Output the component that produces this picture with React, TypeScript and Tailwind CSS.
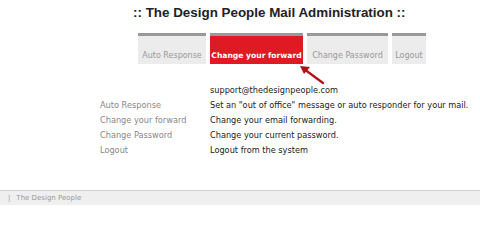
import React from 'react';

const tabs = [
  { label: 'Auto Response', w: 'w-[68px]', active: false },
  { label: 'Change your forward', w: 'w-[93px]', active: true },
  { label: 'Change Password', w: 'w-[81px]', active: false },
  { label: 'Logout', w: 'w-[34px]', active: false },
];

const rows = [
  ['Auto Response', 'Set an "out of office" message or auto responder for your mail.'],
  ['Change your forward', 'Change your email forwarding.'],
  ['Change Password', 'Change your current password.'],
  ['Logout', 'Logout from the system'],
];

export default function App() {
  return (
    <div className="relative w-[480px] h-[205px] bg-white flex flex-col overflow-hidden font-['DejaVu_Sans',sans-serif]">
      {/* Heading */}
      <h1 className="pl-[133px] pt-[4px] h-[33px] text-[13.4px] leading-[18px] font-bold text-[#222] font-['Liberation_Sans',Arial,sans-serif]">
        :: The Design People Mail Administration ::
      </h1>

      {/* Tabs */}
      <div className="flex gap-[4px] pl-[138px]">
        {tabs.map((t) => (
          <div
            key={t.label}
            className={`${t.w} h-[31px] border-t-[3px] border-[#999] flex items-center justify-center pt-[12px] whitespace-nowrap ${
              t.active ? 'bg-[#e01a22] text-white font-bold text-[7.6px]' : 'bg-[#ececec] text-[#999] text-[8px]'
            }`}
          >
            {t.label}
          </div>
        ))}
      </div>

      {/* Arrow pointing at the active tab */}
      <svg className="absolute left-[298px] top-[63px]" width="30" height="24" viewBox="0 0 30 24">
        <line x1="25" y1="20" x2="6" y2="6" stroke="#b01218" strokeWidth="2.2" strokeLinecap="round" />
        <polygon points="2,3 12,4 6,11" fill="#b01218" />
      </svg>

      {/* Info rows */}
      <div className="pt-[19px] pl-[100px] text-[8.2px] leading-[15px]">
        <div className="grid grid-cols-[110px_1fr]">
          <div />
          <div className="text-[#222]">support@thedesignpeople.com</div>
          {rows.map(([label, desc]) => (
            <React.Fragment key={label}>
              <div className="text-[#888]">{label}</div>
              <div className="text-[#222] whitespace-nowrap">{desc}</div>
            </React.Fragment>
          ))}
        </div>
      </div>

      {/* Footer */}
      <div className="mt-auto h-[15px] border-t border-[#d0d0d0] bg-[#efefef] flex items-center pl-[8px] text-[7px] text-[#999]">
        <span>|</span>
        <span className="ml-[6px]">The Design People</span>
      </div>
    </div>
  );
}
